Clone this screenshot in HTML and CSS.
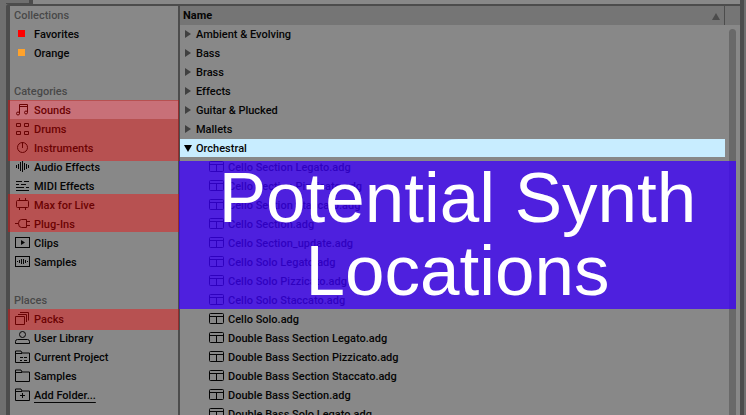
FILE: index.html
```
<!DOCTYPE html>
<html lang="en">
<head>
    <meta charset="UTF-8" />
    <meta name="viewport" content="width=device-width, initial-scale=1.0" />
    <title>Browser - Potential Synth Locations</title>
    <link rel="stylesheet" href="styles.css">
</head>
<body>

<svg class="sprite" aria-hidden="true">
    <symbol id="rack" viewBox="0 0 15 15">
        <rect x="0.5" y="1.5" width="14" height="10" rx="1" />
        <path d="M1 4.5h13M7.5 5v6.500" />
    </symbol>
    <symbol id="folder" viewBox="0 0 15 15">
        <path d="M0.5 12.500v-11.500h5.500l1 2h7.500v9.500zM1 3.500h6" />
    </symbol>
</svg>

<div class="topbar">
    <div class="tab"></div>
    <div class="strip"></div>
</div>

<div class="browser">
    <nav class="sidebar">
        <h2>Collections</h2>
        <button type="button"><span class="swatch red"></span>Favorites</button>
        <button type="button"><span class="swatch orange"></span>Orange</button>

        <h2 class="spaced">Categories</h2>
        <div class="marked tall">
            <button type="button" class="current">
                <svg class="icon" viewBox="0 0 15 15"><path d="M4.500 10.500v-9h8v8M4.500 3.500h8" /><circle cx="3" cy="10.500" r="1.500" /><circle cx="11" cy="9.500" r="1.500" /></svg>Sounds
            </button>
            <button type="button">
                <svg class="icon" viewBox="0 0 15 15"><path d="M1.500 1.500h4v3h-4zM9.500 1.500h4v3h-4zM1.500 9.500h4v3h-4zM9.500 9.500h4v3h-4z" /></svg>Drums
            </button>
            <button type="button">
                <svg class="icon" viewBox="0 0 15 15"><circle cx="7.500" cy="6.500" r="5" /><path d="M7.500 1v6" /></svg>Instruments
            </button>
        </div>
        <button type="button">
            <svg class="icon" viewBox="0 0 15 15"><path d="M1.500 5v3M3.500 4v5M5.500 2v9M7.500 1v11M9.500 3v7M11.500 4v5M13.500 5v3" /></svg>Audio Effects
        </button>
        <button type="button">
            <svg class="icon" viewBox="0 0 15 15"><path d="M1 2.500h6M9 2.500h5M1 5.500h3M6 5.500h5M1 8.500h8M11 8.500h3M1 11.500h13" /></svg>MIDI Effects
        </button>
        <div class="marked middle">
            <button type="button">
                <svg class="icon" viewBox="0 0 15 15"><rect x="1.500" y="2.500" width="12" height="7" rx="1" /><path d="M4.500 0v2.500M10.500 0v2.500M4.500 9.500v2.500M10.500 9.500v2.500" /></svg>Max for Live
            </button>
            <button type="button">
                <svg class="icon" viewBox="0 0 15 15"><path d="M0 6.500h3.500M11.500 2.500h-5q-3 0-3 4t3 4h5zM11.500 4.500h3.500M11.500 8.500h3.500" /></svg>Plug-Ins
            </button>
        </div>
        <button type="button">
            <svg class="icon" viewBox="0 0 15 15"><rect x="0.500" y="1.500" width="14" height="10" /><path class="solid" d="M6 4l4 2.500-4 2.500z" /></svg>Clips
        </button>
        <button type="button">
            <svg class="icon" viewBox="0 0 15 15"><rect x="0.500" y="1.500" width="14" height="10" /><path d="M2.500 6v1M4.500 5v3M6.500 4v5M8.500 4v5M10.500 5v3M12.500 6v1" /></svg>Samples
        </button>

        <h2 class="spaced">Places</h2>
        <div class="marked single">
            <button type="button">
                <svg class="icon" viewBox="0 0 15 15"><path d="M0.500 4.500h9v8h-9zM3 2.500h8.500v7.500M5 0.500h8.500v8" /></svg>Packs
            </button>
        </div>
        <button type="button">
            <svg class="icon" viewBox="0 0 15 15"><circle cx="7.500" cy="3.500" r="3" /><path d="M0.500 12.500v-2q0-2 2-2h10q2 0 2 2v2z" /></svg>User Library
        </button>
        <button type="button">
            <svg class="icon" viewBox="0 0 15 15"><use href="#folder" /><path d="M5 7.500h3M9 7.500h3M5 10.500h2M9 10.500h3" /></svg>Current Project
        </button>
        <button type="button">
            <svg class="icon" viewBox="0 0 15 15"><use href="#folder" /></svg>Samples
        </button>
        <button type="button">
            <svg class="icon" viewBox="0 0 15 15"><use href="#folder" /><path d="M5 7.500h5M7.500 5v5" /></svg><span class="add">Add Folder...</span>
        </button>
    </nav>

    <main class="content">
        <div class="header">
            <button type="button" class="name">Name <span class="sort"></span></button>
        </div>
        <div class="body">
            <div class="list">
                <button type="button" class="group">Ambient &amp; Evolving</button>
                <button type="button" class="group">Bass</button>
                <button type="button" class="group">Brass</button>
                <button type="button" class="group">Effects</button>
                <button type="button" class="group">Guitar &amp; Plucked</button>
                <button type="button" class="group">Mallets</button>
                <button type="button" class="group open">Orchestral</button>
                <button type="button" class="file"><svg class="icon"><use href="#rack" /></svg>Cello Section Legato.adg</button>
                <button type="button" class="file"><svg class="icon"><use href="#rack" /></svg>Cello Section Pizzicato.adg</button>
                <button type="button" class="file"><svg class="icon"><use href="#rack" /></svg>Cello Section Staccato.adg</button>
                <button type="button" class="file"><svg class="icon"><use href="#rack" /></svg>Cello Section.adg</button>
                <button type="button" class="file"><svg class="icon"><use href="#rack" /></svg>Cello Section_update.adg</button>
                <button type="button" class="file"><svg class="icon"><use href="#rack" /></svg>Cello Solo Legato.adg</button>
                <button type="button" class="file"><svg class="icon"><use href="#rack" /></svg>Cello Solo Pizzicato.adg</button>
                <button type="button" class="file"><svg class="icon"><use href="#rack" /></svg>Cello Solo Staccato.adg</button>
                <button type="button" class="file"><svg class="icon"><use href="#rack" /></svg>Cello Solo.adg</button>
                <button type="button" class="file"><svg class="icon"><use href="#rack" /></svg>Double Bass Section Legato.adg</button>
                <button type="button" class="file"><svg class="icon"><use href="#rack" /></svg>Double Bass Section Pizzicato.adg</button>
                <button type="button" class="file"><svg class="icon"><use href="#rack" /></svg>Double Bass Section Staccato.adg</button>
                <button type="button" class="file"><svg class="icon"><use href="#rack" /></svg>Double Bass Section.adg</button>
                <button type="button" class="file"><svg class="icon"><use href="#rack" /></svg>Double Bass Solo Legato.adg</button>
            </div>
            <div class="scroll"><div class="thumb"></div></div>
        </div>
        <div class="banner">Potential Synth<br>Locations</div>
    </main>
</div>

</body>
</html>
```
FILE: styles.css
```
* {
    box-sizing: border-box;
}

body {
    margin: 0;
    height: 100vh;
    overflow: hidden;
    display: flex;
    flex-direction: column;
    background-color: #6f6f6f;
    color: #050505;
    font-family: Roboto, "Noto Sans", sans-serif;
    font-size: 11px;
    font-weight: 500;
    line-height: 14px;
}

.sprite {
    display: none;
}

/* window frame */
.topbar {
    display: flex;
    height: 4px;
    flex-shrink: 0;
    padding-right: 2px;
}

.tab {
    width: 27px;
    margin-left: 6px;
    border-right: 4px solid #4c4c4c;
    border-bottom: 1px solid #4c4c4c;
    border-top-left-radius: 3px;
}

.strip {
    flex: 1;
    background-color: #888;
    border-right: 4px solid #4c4c4c;
}

.browser {
    flex: 1;
    min-height: 0;
    display: flex;
    margin: 0 2px 0 6px;
    border: 4px solid #4c4c4c;
    border-top-width: 2px;
    border-bottom: 0;
    border-top-left-radius: 3px;
    background-color: #888;
}

button {
    display: flex;
    align-items: center;
    width: 100%;
    height: 19px;
    flex-shrink: 0;
    margin: 0;
    padding: 1px 0 0;
    border: 0;
    background: none;
    color: inherit;
    font: inherit;
    text-align: left;
    white-space: nowrap;
    cursor: pointer;
}

.icon {
    width: 15px;
    height: 15px;
    flex-shrink: 0;
    margin: 0 4px 1px 0;
    fill: none;
    stroke: currentColor;
}

.icon .solid {
    fill: currentColor;
    stroke: none;
}

/* sidebar */
.sidebar {
    width: 170px;
    flex-shrink: 0;
    border-right: 2px solid #4c4c4c;
}

.sidebar button {
    padding-left: 5px;
}

.sidebar h2 {
    margin: 0;
    padding-left: 4px;
    color: #484848;
    font-size: 11px;
    font-weight: 500;
    line-height: 19px;
}

.sidebar .spaced {
    margin-top: 19px;
}

.sidebar .current {
    background: linear-gradient(#a3bbc8, #a3bbc8) no-repeat 0 0 / 100% 18px;
}

.swatch {
    width: 7px;
    height: 7px;
    margin: 0 9px 3px 3px;
}

.red {
    background-color: #f00;
}

.orange {
    background-color: #ffa22b;
}

.add {
    text-decoration: underline;
    text-underline-offset: 3px;
}

.marked {
    position: relative;
}

.marked::after {
    content: "";
    position: absolute;
    inset: -1px -1px -1px -2px;
    background-color: rgba(255, 0, 0, 0.4);
    pointer-events: none;
}

.tall::after {
    bottom: -3px;
}

.middle::after {
    top: -2px;
    bottom: 2px;
}

/* file list */
.content {
    position: relative;
    flex: 1;
    min-width: 0;
    display: flex;
    flex-direction: column;
}

.header {
    flex-shrink: 0;
    padding-right: 15px;
    background-color: #757575;
}

.name {
    justify-content: space-between;
    padding: 1px 4px 0 3px;
    border-right: 1px solid #4c4c4c;
    font-weight: 700;
}

.sort {
    margin-top: 1px;
    border: 4px solid transparent;
    border-top: 0;
    border-bottom: 7px solid #4c4c4c;
}

.body {
    flex: 1;
    min-height: 0;
    display: flex;
}

.list {
    flex: 1;
    min-width: 0;
    overflow: hidden;
}

.group::before {
    content: "";
    margin: 0 5px 2px;
    border: 4px solid transparent;
    border-left: 6px solid #404040;
    border-right: 0;
}

.open {
    background: linear-gradient(#c8edff, #c8edff) no-repeat 0 0 / 100% 18px;
}

.open::before {
    margin: 0 4px 1px;
    border: 4px solid transparent;
    border-top: 7px solid #000;
    border-bottom: 0;
}

.file {
    padding-left: 29px;
}

.scroll {
    width: 15px;
    padding: 4px 4px 0;
}

.thumb {
    width: 7px;
    height: 100%;
    border-radius: 4px 4px 0 0;
    background-color: #696969;
}

.banner {
    position: absolute;
    top: 155px;
    left: -1px;
    right: 4px;
    padding-bottom: 2px;
    background-color: rgba(61, 0, 250, 0.76);
    color: #fff;
    font-family: "Liberation Sans", Arial, sans-serif;
    font-size: 71px;
    font-weight: 400;
    line-height: 73px;
    text-align: center;
    white-space: nowrap;
}
```
